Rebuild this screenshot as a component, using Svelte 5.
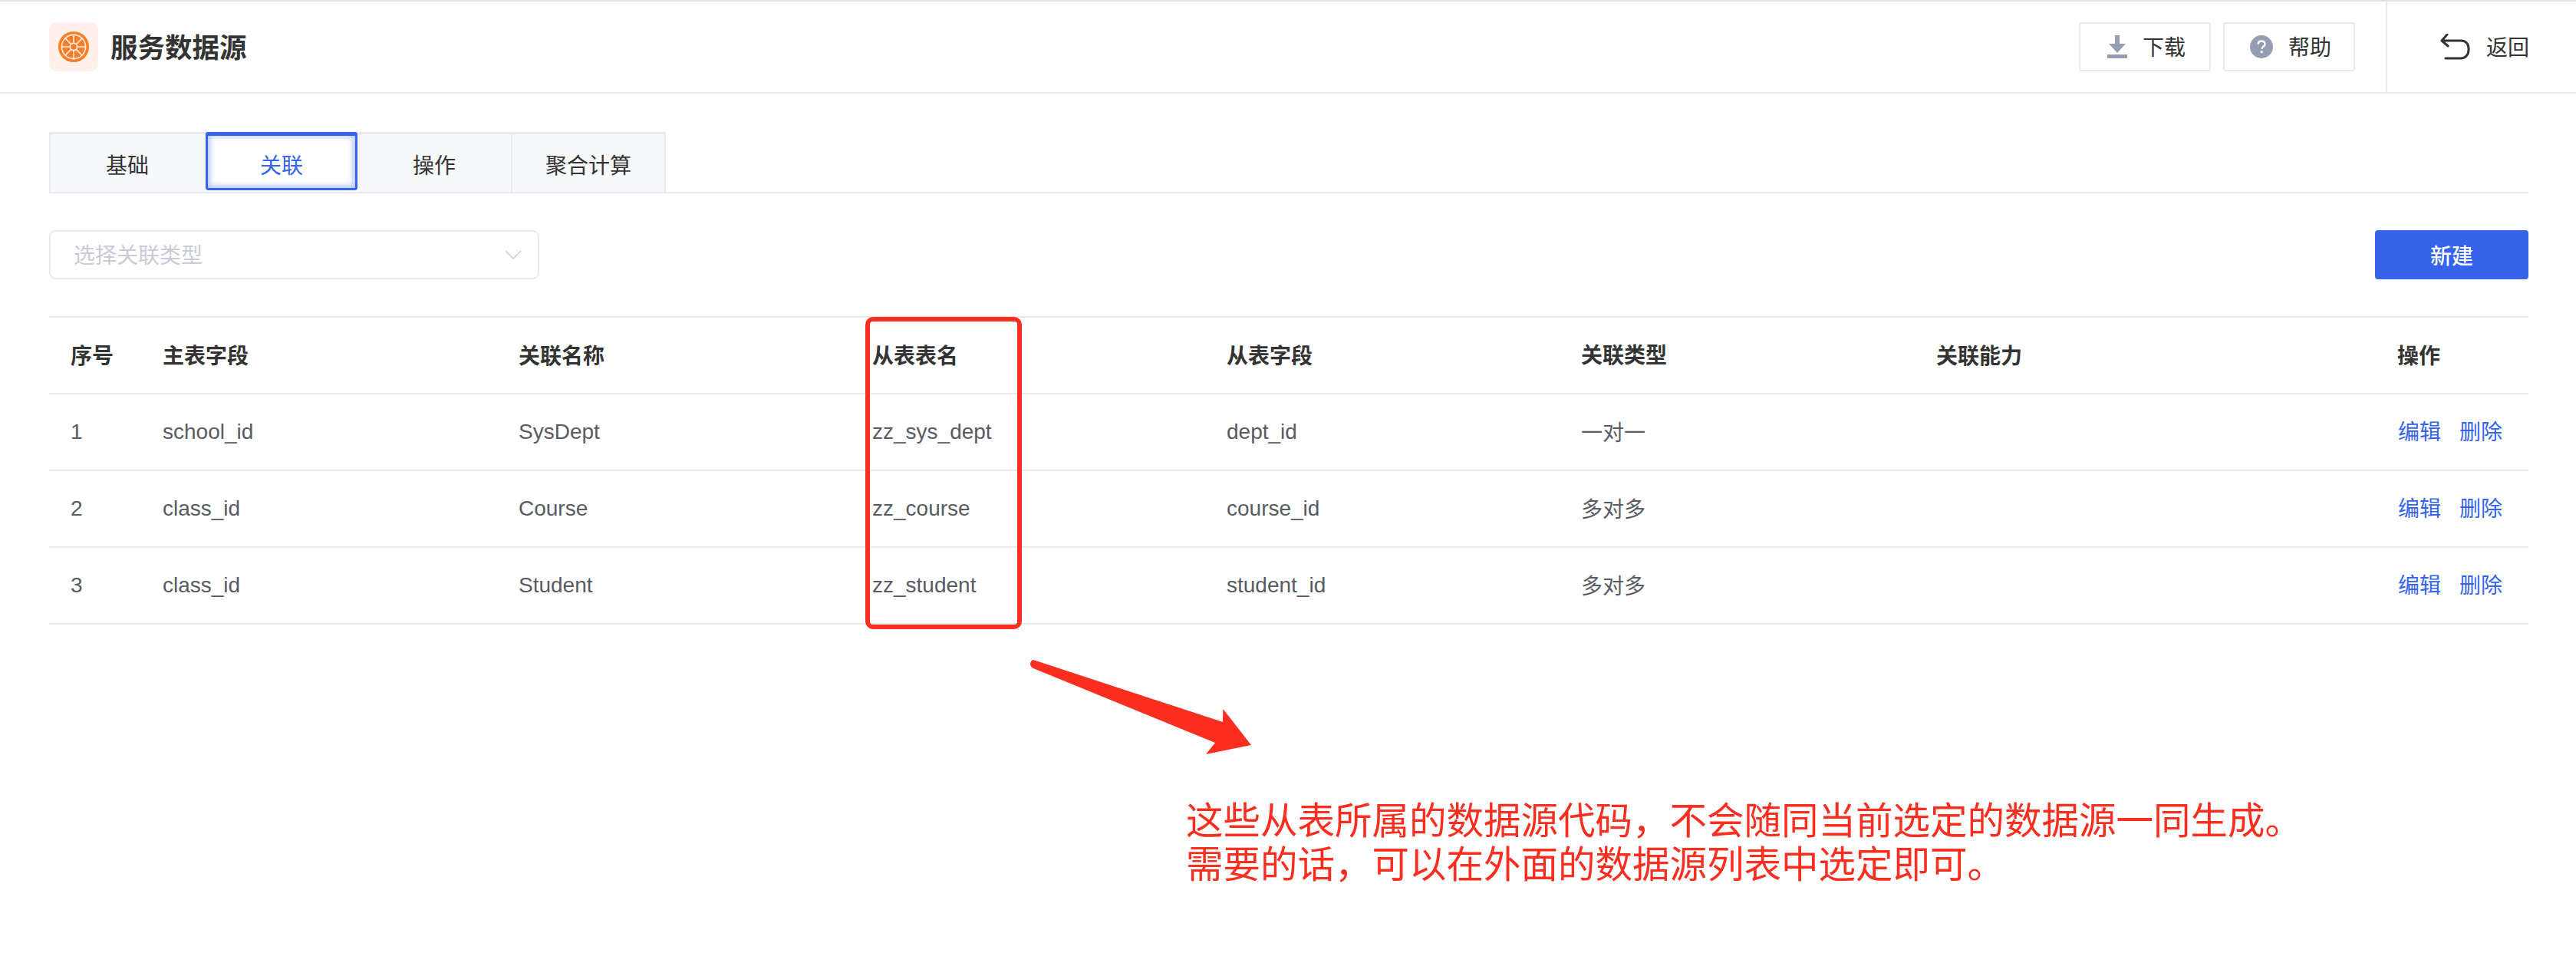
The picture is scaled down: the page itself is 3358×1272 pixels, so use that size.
<script>
  const tabs = ['基础', '关联', '操作', '聚合计算'];
  const columns = ['序号', '主表字段', '关联名称', '从表表名', '从表字段', '关联类型', '关联能力', '操作'];
  const rows = [
    ['1', 'school_id', 'SysDept', 'zz_sys_dept', 'dept_id', '一对一', ''],
    ['2', 'class_id', 'Course', 'zz_course', 'course_id', '多对多', ''],
    ['3', 'class_id', 'Student', 'zz_student', 'student_id', '多对多', '']
  ];
  const spokes = [0, 45, 90, 135];
</script>

<div class="page">
  <header class="header">
    <div class="logo">
      <svg width="40" height="40" viewBox="0 0 40 40">
        <circle cx="20" cy="20" r="20" fill="#fb7d26" />
        <circle cx="20" cy="20" r="15.6" fill="none" stroke="#fff0e9" stroke-width="1.6" />
        {#each spokes as a}
          <line x1="20" y1="4" x2="20" y2="36" stroke="#fff0e9" stroke-width="1.6" transform="rotate({a} 20 20)" />
        {/each}
        <circle cx="20" cy="20" r="4.6" fill="#fb7d26" stroke="#fff0e9" stroke-width="1.6" />
      </svg>
    </div>
    <h1 class="title">服务数据源</h1>
    <div class="actions">
      <button class="tool">
        <svg width="26" height="30" viewBox="0 0 26 30"><path d="M10 0h6v11h8L13 23 2 11h8z" fill="#959db2" /><rect y="25" width="26" height="5" fill="#959db2" /></svg>
        <span>下载</span>
      </button>
      <button class="tool">
        <svg width="30" height="30" viewBox="0 0 30 30"><circle cx="15" cy="15" r="15" fill="#959db2" /><path d="M10.6 11.6c.2-2.6 2-4.1 4.5-4.1s4.4 1.5 4.4 3.8c0 1.8-1 2.8-2.3 3.7-1.2.8-1.6 1.4-1.6 2.9" fill="none" stroke="#fff" stroke-width="2.4" /><circle cx="15.3" cy="21.6" r="1.7" fill="#fff" /></svg>
        <span>帮助</span>
      </button>
    </div>
    <div class="back">
      <svg width="40" height="34" viewBox="0 0 40 34"><path d="M9 1 2 9l8 7M3 9h24c6 0 10 4 10 10v2c0 6-4 11-10 11H7" fill="none" stroke="#333" stroke-width="3" stroke-linecap="round" stroke-linejoin="round" /></svg>
      <span>返回</span>
    </div>
  </header>

  <main class="content">
    <nav class="tabs">
      {#each tabs as tab, i}
        <div class="tab" class:active={i === 1}>{tab}</div>
      {/each}
    </nav>

    <div class="toolbar">
      <div class="select">
        <span>选择关联类型</span>
        <svg width="22" height="12" viewBox="0 0 22 12"><path d="M1 1l10 10L21 1" fill="none" stroke="#c9ccd6" stroke-width="1.6" /></svg>
      </div>
      <button class="primary">新建</button>
    </div>

    <div class="table">
      <div class="row head">
        {#each columns as c}
          <div class="cell">{c}</div>
        {/each}
      </div>
      {#each rows as r}
        <div class="row">
          {#each r as v}
            <div class="cell">{v}</div>
          {/each}
          <div class="cell links"><span>编辑</span><span>删除</span></div>
        </div>
      {/each}
    </div>
  </main>

  <div class="redbox"></div>
  <svg class="arrow" width="300" height="135" viewBox="1340 855 300 135">
    <path d="M1347 860 1594 941 1594.4 924 1631 971 1572 983 1584 968 1347 871Q1341 867 1344 862 1345 860 1347 860z" fill="#fc2e20" />
  </svg>
  <p class="note">这些从表所属的数据源代码，不会随同当前选定的数据源一同生成。<br />需要的话，可以在外面的数据源列表中选定即可。</p>
</div>

<style>
  :global(body) {
    margin: 0;
    background: #fff;
  }
  .page {
    position: relative;
    width: 3358px;
    height: 1272px;
    overflow: hidden;
    background: #fff;
    color: #333;
    font-family: "Liberation Sans", "Noto Sans CJK SC", sans-serif;
    font-size: 28px;
  }
  .header {
    display: flex;
    align-items: center;
    box-sizing: border-box;
    height: 122px;
    padding-left: 64px;
    border-top: 2px solid #e2e2e4;
    border-bottom: 2px solid #e8e9ee;
  }
  .logo {
    display: flex;
    align-items: center;
    justify-content: center;
    width: 64px;
    height: 64px;
    border-radius: 10px;
    background: #fff0e9;
  }
  .title {
    margin: 0 0 3px 16px;
    font-size: 35.5px;
    font-weight: 700;
    color: #333;
  }
  .actions {
    display: flex;
    gap: 16px;
    margin-left: auto;
    margin-right: 40px;
  }
  .tool {
    display: flex;
    align-items: center;
    justify-content: center;
    gap: 20px;
    box-sizing: border-box;
    width: 172px;
    height: 64px;
    padding: 0 0 0 4px;
    border: 2px solid #e8e9ee;
    border-radius: 4px;
    background: #fff;
    color: #333;
    font: inherit;
  }
  .tool span {
    padding-bottom: 2px;
  }
  .back {
    display: flex;
    align-items: center;
    align-self: stretch;
    gap: 20px;
    width: 248px;
    box-sizing: border-box;
    padding-left: 69px;
    border-left: 2px solid #e8e9ee;
  }
  .back span {
    padding-bottom: 2px;
  }
  .content {
    padding: 50px 62px 0 64px;
  }
  .tabs {
    display: flex;
    height: 80px;
    box-sizing: border-box;
    border-bottom: 2px solid #e8e9ee;
  }
  .tab {
    display: flex;
    align-items: center;
    justify-content: center;
    box-sizing: border-box;
    width: 200px;
    height: 80px;
    padding-top: 3px;
    border-top: 3px solid #e8e9ee;
    border-right: 2px solid #e8e9ee;
    border-bottom: 2px solid #e8e9ee;
    background: #f7f8fa;
  }
  .tab:first-child {
    border-left: 2px solid #e8e9ee;
    border-right: 0;
    padding-right: 2px;
    width: 204px;
  }
  .tab:nth-child(3) {
    width: 202px;
  }
  .tab.active {
    width: 198px;
    height: 76px;
    padding-top: 7px;
    border: 0;
    border-radius: 4px;
    background: #fff;
    color: #3563ec;
    box-shadow: inset 0 6px 0 -1px #3563ec, inset 0 0 0 3px #3563ec, inset 0 0 7px 6px #b4c5f8;
  }
  .toolbar {
    display: flex;
    justify-content: space-between;
    margin-top: 48px;
  }
  .select {
    display: flex;
    align-items: center;
    justify-content: space-between;
    box-sizing: border-box;
    width: 639px;
    height: 64px;
    padding: 0 21px 0 30px;
    border: 2px solid #e8e9ee;
    border-radius: 8px;
    color: #c9ccd6;
  }
  .select span {
    padding-bottom: 3px;
  }
  .primary {
    width: 200px;
    height: 64px;
    border: 0;
    border-radius: 4px;
    background: #3563ec;
    color: #fff;
    font: inherit;
    font-weight: 500;
  }
  .table {
    margin-top: 48px;
    border-top: 2px solid #e8e9ee;
  }
  .row {
    display: grid;
    grid-template-columns: 120px 464px 461px 462px 462px 463px 600px 200px;
    height: 100px;
    box-sizing: border-box;
    align-items: center;
    border-bottom: 2px solid #e8e9ee;
    color: #595b63;
  }
  .row.head {
    color: #333;
    font-weight: 700;
    padding-bottom: 3px;
  }
  .cell {
    padding-left: 28px;
  }
  .cell:nth-child(8) {
    padding-left: 29px;
  }
  .cell:nth-child(6) {
    padding-bottom: 2px;
  }
  .cell.links {
    display: flex;
    gap: 24px;
    padding-left: 30px;
    padding-bottom: 5px;
    color: #3563ec;
  }
  .redbox {
    position: absolute;
    left: 1128px;
    top: 413px;
    box-sizing: border-box;
    width: 204px;
    height: 407px;
    border: 6px solid #fc2e20;
    border-radius: 10px;
  }
  .arrow {
    position: absolute;
    left: 1340px;
    top: 855px;
  }
  .note {
    position: absolute;
    left: 1546px;
    top: 1038px;
    margin: 0;
    font-family: "Noto Sans CJK SC", sans-serif;
    font-size: 48.5px;
    line-height: 57px;
    color: #fc2e20;
    white-space: nowrap;
  }
</style>
